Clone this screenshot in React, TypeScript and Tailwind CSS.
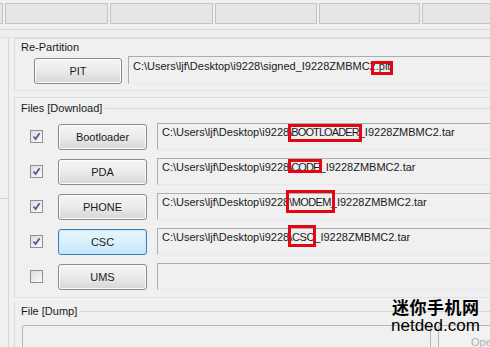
import React from "react";

const font = { fontFamily: '"Liberation Sans", Arial, sans-serif' };

function Check({ checked }: { checked: boolean }) {
  return (
    <div className="w-[13px] h-[13px] border border-[#8f8f8f] bg-gradient-to-br from-[#dcdcdc] to-[#fbfbfb] flex items-center justify-center shrink-0">
      {checked && (
        <svg width="9" height="9" viewBox="0 0 9 9">
          <path d="M1.5 4.5 L3.6 7 L7.6 1.2" stroke="#4a5f8f" strokeWidth="1.8" fill="none" />
        </svg>
      )}
    </div>
  );
}

function Btn({ label, active }: { label: string; active?: boolean }) {
  return (
    <div
      className={
        "h-[26px] rounded-[3px] border flex items-center justify-center text-[11px] text-[#1a1a1a] shrink-0 " +
        (active
          ? "border-[#3c7fb1] bg-gradient-to-b from-[#e8f5fc] via-[#dcf0fa] to-[#bee6fd] shadow-[inset_0_0_0_1px_#cde9f8]"
          : "border-[#8a8a8a] bg-gradient-to-b from-[#f4f4f4] via-[#ebebeb] to-[#d6d6d6] shadow-[inset_0_0_0_1px_#fcfcfc]")
      }
    >
      {label}
    </div>
  );
}

function Mark({ children, cls, tr }: { children: React.ReactNode; cls: string; tr?: string }) {
  return (
    <span className={"relative " + (tr || "")}>
      {children}
      <span className={"absolute border-[3px] border-[#e30613] " + cls} />
    </span>
  );
}

function Field({ children, h = "h-[27px]", pt = "pt-[2px]" }: { children?: React.ReactNode; h?: string; pt?: string }) {
  return (
    <div
      className={
        "flex-1 " +
        h +
        " " +
        pt +
        " border-t border-l border-[#abadb3] border-b border-b-[#e3e9ef] border-r-0 bg-[#f0f0f0] pl-[4px] text-[11px] leading-[13px] text-[#1a1a1a] whitespace-nowrap"
      }
    >
      {children}
    </div>
  );
}

function Row({
  label,
  checked,
  active,
  children,
}: {
  label: string;
  checked: boolean;
  active?: boolean;
  children?: React.ReactNode;
}) {
  return (
    <div className="flex items-start h-[27px]">
      <div className="pt-[7px] pl-[15px] pr-[15px]">
        <Check checked={checked} />
      </div>
      <div className="w-[89px] mt-[1px]">
        <Btn label={label} active={active} />
      </div>
      <div className="w-[10px]" />
      <Field>{children}</Field>
    </div>
  );
}

export default function App() {
  const base = "C:\\Users\\ljf\\Desktop\\i9228";
  return (
    <div className="w-[490px] h-[347px] overflow-hidden bg-[#f0f0f0] relative" style={font}>
      {/* top status boxes */}
      <div className="flex items-start h-[28px] pt-[3px] ml-[-100px]">
        {[103, 103, 103, 102, 101, 110].map((w, i) => (
          <div
            key={i}
            style={{ width: w }}
            className="h-[21px] mr-[2px] border border-[#c4c4c4] bg-[#e6e6e6] shrink-0"
          />
        ))}
      </div>
      <div className="h-[9px] border-t border-[#dadada] border-b border-b-[#e0e0e0] mt-[1px] bg-[#efefef]" />

      <div className="flex">
        {/* left strip */}
        <div className="w-[9px] h-[320px] border-r border-[#d4d4d4] shrink-0">
          <div className="h-[161px] border-b border-[#d4d4d4]" />
        </div>
        <div className="w-[5px] shrink-0" />

        <div className="flex-1 flex flex-col">
          {/* Re-Partition */}
          <div className="border-t border-l border-[#d5d9dc] h-[52px]">
            <div className="pl-[6px] pt-[2px] text-[11px] leading-[13px] text-[#1a1a1a]">Re-Partition</div>
            <div className="flex items-start mt-[2px]">
              <div className="w-[19px]" />
              <div className="w-[88px] mt-[2px]">
                <Btn label="PIT" />
              </div>
              <div className="w-[6px]" />
              <Field h="h-[28px]" pt="pt-[3px]">
                {base}\signed_I9228ZMBMC2
                <Mark cls="left-[-5px] right-[-3px] top-[1px] bottom-[-3px]">.pit</Mark>
              </Field>
            </div>
          </div>
          <div className="h-[8px] border-t border-[#dfe3e6] border-b border-b-[#dadde0]" />

          {/* Files [Download] */}
          <div className="border-l border-[#d5d9dc] flex flex-col">
            <div className="flex items-center h-[20px]">
              <div className="pl-[6px] text-[11px] leading-[13px] text-[#1a1a1a] pr-[3px]">Files [Download]</div>
              <div className="flex-1 border-t border-[#d5d9dc]" />
            </div>
            <div className="flex flex-col gap-[8px] mt-[5px]">
              <Row label="Bootloader" checked>
                {base}
                <Mark tr="tracking-[-0.9px]" cls="left-[-1px] right-[-3px] top-[-2px] bottom-[-4px]">\BOOTLOADER</Mark>
                _I9228ZMBMC2.tar
              </Row>
              <Row label="PDA" checked>
                {base}
                <Mark tr="tracking-[-0.9px]" cls="left-[-1px] right-[-2px] top-[-2px] bottom-[0px]">\CODE</Mark>
                _I9228ZMBMC2.tar
              </Row>
              <Row label="PHONE" checked>
                {base}
                <Mark tr="tracking-[-0.6px]" cls="left-[-3px] right-[-4px] top-[-6px] bottom-[-5px]">\MODEM</Mark>
                _I9228ZMBMC2.tar
              </Row>
              <Row label="CSC" checked active>
                {base}
                <Mark tr="tracking-[-0.3px]" cls="left-[-1px] right-[-2px] top-[-6px] bottom-[-4px]">\CSC</Mark>
                _I9228ZMBMC2.tar
              </Row>
              <Row label="UMS" checked={false} />
            </div>
            <div className="h-[7px]" />
          </div>
          <div className="h-[6px] border-t border-[#dfe3e6]" />

          {/* File [Dump] */}
          <div className="border-l border-[#d5d9dc]">
            <div className="flex items-center h-[16px]">
              <div className="pl-[6px] text-[11px] leading-[13px] text-[#1a1a1a] pr-[3px]">File [Dump]</div>
              <div className="flex-1 border-t border-[#d5d9dc]" />
            </div>
            <div className="flex mt-[6px] pl-[7px]">
              <div className="w-[409px] h-[28px] border border-[#b5b5b5] bg-[#f0f0f0] rounded-[2px]" />
              <div className="w-[7px]" />
              <div className="flex-1 h-[28px] border border-[#b5b5b5] rounded-[2px] bg-[#f2f2f2] text-[11px] text-[#b0b0b0] pl-[32px] pt-[8px] whitespace-nowrap overflow-hidden">
                Open
              </div>
            </div>
          </div>
        </div>
      </div>

      {/* watermark */}
      <div className="absolute left-[392px] top-[298px] text-black leading-none">
        <div
          className="text-[17px] tracking-[0.5px]"
          style={{ fontFamily: '"Noto Sans CJK SC", sans-serif', fontWeight: 700 }}
        >
          迷你手机网
        </div>
        <div className="text-[17px] mt-[2px] -ml-[1px]" style={{ fontFamily: '"Liberation Sans", Arial, sans-serif' }}>
          netded.com
        </div>
      </div>
    </div>
  );
}
